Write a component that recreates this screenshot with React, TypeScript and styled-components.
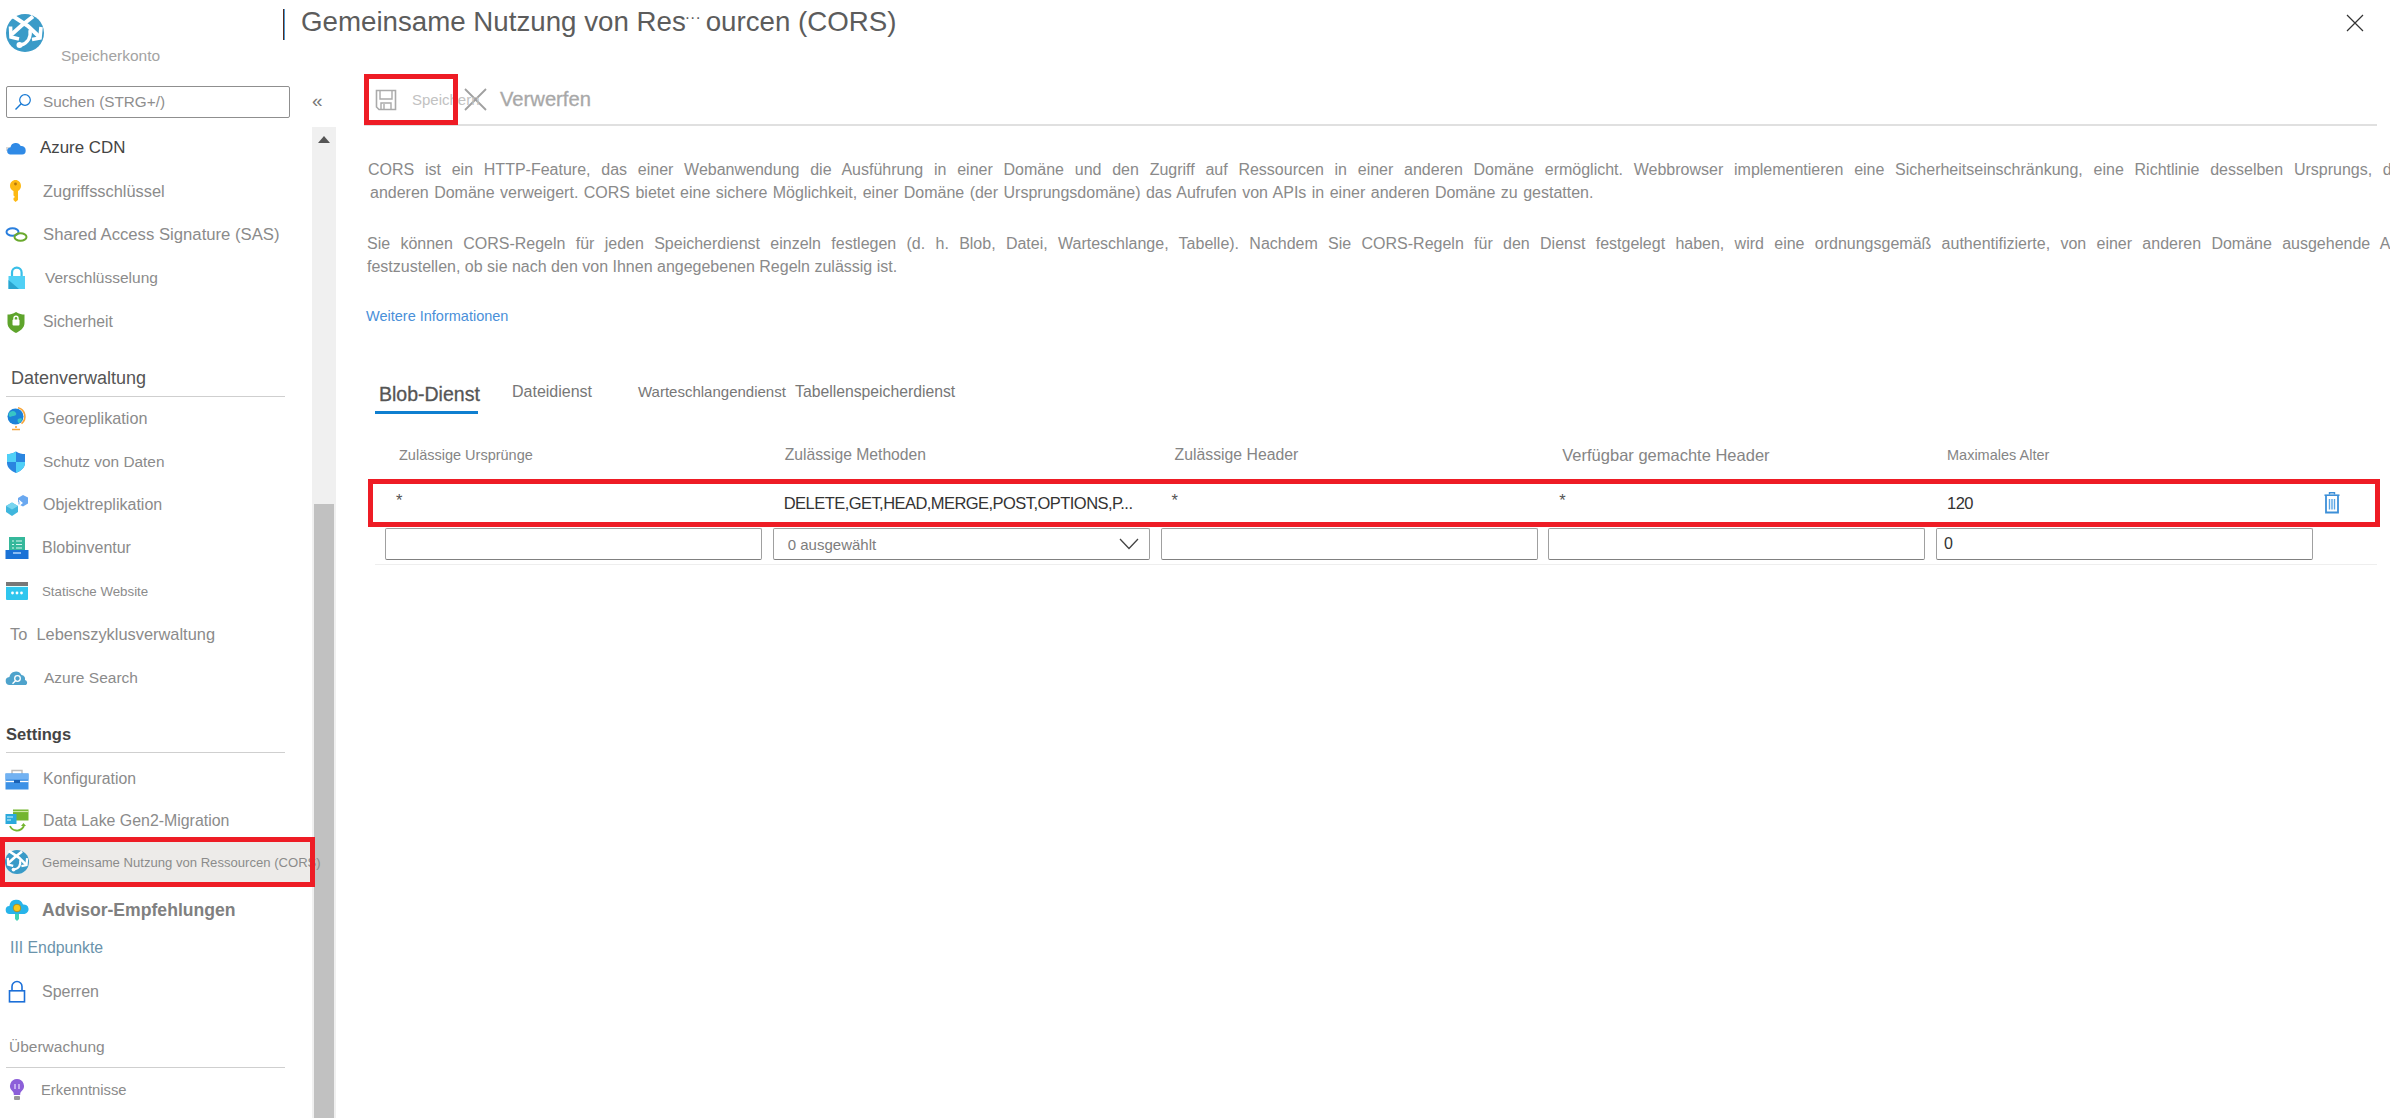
import React from "react";
import styled, { createGlobalStyle } from "styled-components";

const Global = createGlobalStyle`
  html, body { margin: 0; padding: 0; background: #fff; overflow: hidden; }
  body { font-family: "Liberation Sans", Arial, sans-serif; }
  * { box-sizing: border-box; }
`;

const Page = styled.div`
  width: 2390px;
  height: 1118px;
  overflow: hidden;
  display: flex;
  flex-direction: column;
`;
const Header = styled.header`
  height: 72px;
  flex-shrink: 0;
  display: flex;
  align-items: flex-start;
`;
const Brand = styled.div`
  width: 283px;
  height: 72px;
  padding: 14px 0 0 6px;
  flex-shrink: 0;
  display: flex;
`;
const BrandName = styled.span`
  font-size: 15.5px;
  color: #a3a3a3;
  margin: 34px 0 0 17px;
  line-height: 16px;
`;
const TitleBar = styled.div`
  width: 2px;
  height: 31px;
  margin-top: 9px;
  background: linear-gradient(90deg, #5a2a1c 50%, #4a9ad6 50%);
  flex-shrink: 0;
`;
const Title = styled.h1`
  margin: 2px 0 0 16px;
  font-size: 27.7px;
  line-height: 40px;
  font-weight: 400;
  color: #5c5c5c;
  white-space: nowrap;
`;
const TitleDots = styled.span`
  font-size: 16px;
  position: relative;
  top: -8px;
  margin: 0 5px 0 -1px;
`;
const Close = styled.button`
  margin: 13px 25px 0 auto;
  padding: 0;
  width: 20px;
  height: 20px;
  border: 0;
  background: none;
  display: block;
`;
const Body = styled.div`
  flex: 1;
  display: flex;
  min-height: 0;
`;
const Sidebar = styled.aside`
  width: 336px;
  flex-shrink: 0;
  display: flex;
  flex-direction: column;
`;
const SearchRow = styled.div`
  height: 54px;
  padding: 14px 0 0 6px;
  display: flex;
  flex-shrink: 0;
`;
const SearchBox = styled.div`
  width: 284px;
  height: 32px;
  border: 1px solid #8f8f8f;
  border-radius: 2px;
  display: flex;
  align-items: center;
  padding-left: 7px;
  gap: 11px;
`;
const SearchText = styled.span`
  font-size: 15.3px;
  color: #8e8e8e;
`;
const Collapse = styled.span`
  margin: 1px 0 0 22px;
  font-size: 19px;
  line-height: 28px;
  color: #777;
`;
const SideBody = styled.div`
  flex: 1;
  display: flex;
  min-height: 0;
`;
const NavList = styled.nav`
  width: 312px;
  flex-shrink: 0;
  position: relative;
  z-index: 1;
`;
const NavRow = styled.div<{ $h: number; $active?: boolean }>`
  height: ${(p) => p.$h}px;
  width: ${(p) => (p.$active ? 315 : 312)}px;
  display: flex;
  align-items: center;
  padding-left: 5px;
  white-space: nowrap;
  ${(p) => p.$active && "background:#edebe9; outline:5px solid #ee1c25; outline-offset:-5px;"}
`;
const IconSlot = styled.span`
  width: 24px;
  height: 24px;
  flex-shrink: 0;
  display: block;
`;
const NavLabel = styled.span<{ $gap: number; $size: number; $color: string; $bold?: boolean }>`
  margin-left: ${(p) => p.$gap}px;
  font-size: ${(p) => p.$size}px;
  color: ${(p) => p.$color};
  font-weight: ${(p) => (p.$bold ? 700 : 400)};
`;
const SectionHead = styled.div<{ $h: number; $x: number; $color: string; $size: number; $bold?: boolean; $pb?: number }>`
  height: ${(p) => p.$h}px;
  margin-right: 27px;
  margin-left: 6px;
  padding-left: ${(p) => p.$x - 6}px;
  padding-bottom: ${(p) => p.$pb ?? 8}px;
  display: flex;
  align-items: flex-end;
  border-bottom: 1.5px solid #cfcfcf;
  font-size: ${(p) => p.$size}px;
  font-weight: ${(p) => (p.$bold ? 600 : 400)};
  color: ${(p) => p.$color};
  line-height: 20px;
`;
const Scrollbar = styled.div`
  width: 24px;
  margin-top: 1px;
  background: #f0f0f0;
  padding: 9px 2px 0;
  display: flex;
  flex-direction: column;
`;
const ScrollUp = styled.span`
  width: 0;
  height: 0;
  margin: 0 auto;
  border-left: 6px solid transparent;
  border-right: 6px solid transparent;
  border-bottom: 7px solid #555;
`;
const ScrollThumb = styled.div`
  flex: 1;
  margin-top: 361px;
  background: #c1c1c1;
`;
const Main = styled.main`
  flex: 1;
  min-width: 0;
  overflow: hidden;
`;
const Toolbar = styled.div`
  margin: 3px 13px 0 28px;
  height: 51px;
  display: flex;
  align-items: center;
  border-bottom: 2px solid #e0e0e0;
`;
const SaveButton = styled.div`
  width: 94px;
  height: 51px;
  flex-shrink: 0;
  outline: 5px solid #ee1c25;
  outline-offset: -5px;
  display: flex;
  align-items: center;
  padding-left: 11px;
  white-space: nowrap;
  position: relative;
`;
const SaveLabel = styled.span`
  margin-left: 15px;
  font-size: 15px;
  color: #c2c2c2;
`;
const Discard = styled.div`
  margin-left: 6px;
  display: flex;
  align-items: center;
  gap: 13px;
  font-size: 20.2px;
  font-weight: 400;
  color: #a8a8a8;
  -webkit-text-stroke: 0.3px #a8a8a8;
`;
const Description = styled.div`
  margin: 32px 0 0 32px;
  font-size: 16px;
  line-height: 23px;
  color: #8a8a8a;
`;
const Paragraph = styled.p`
  margin: 0 0 28px;
`;
const Line = styled.span<{ $spacing?: number; $indent?: number }>`
  display: block;
  white-space: nowrap;
  word-spacing: ${(p) => p.$spacing ?? 0}px;
  margin-left: ${(p) => p.$indent ?? 0}px;
`;
const MoreLink = styled.a`
  display: block;
  margin: 12px 0 0 30px;
  font-size: 14.5px;
  line-height: 20px;
  color: #4a90d9;
`;
const Tabs = styled.div`
  margin: 48px 0 0 39px;
  display: flex;
  align-items: flex-start;
  height: 47px;
`;
const Tab = styled.div<{ $active?: boolean; $w: number; $size: number; $after?: number }>`
  width: ${(p) => p.$w}px;
  margin-right: ${(p) => p.$after ?? 0}px;
  height: ${(p) => (p.$active ? 40 : 36)}px;
  padding: ${(p) => (p.$active ? "0 0 0 4px" : "0")};
  font-size: ${(p) => p.$size}px;
  line-height: ${(p) => (p.$active ? 40 : 36)}px;
  color: ${(p) => (p.$active ? "#555" : "#777")};
  white-space: nowrap;
  ${(p) => p.$active && "border-bottom: 3px solid #0f7fd0; -webkit-text-stroke: 0.3px #555;"}
`;
const Table = styled.div`
  margin: 0 10px 0 32px;
`;
const gridCols = "repeat(5, 377px) 1fr";
const HeaderGrid = styled.div`
  display: grid;
  grid-template-columns: ${gridCols};
  column-gap: 10.75px;
  padding: 0 0 0 17px;
  height: 58px;
  align-items: start;
`;
const HeaderCell = styled.div<{ $size: number; $x: number }>`
  padding: 24px 0 0 ${(p) => p.$x}px;
  font-size: ${(p) => p.$size}px;
  line-height: 20px;
  color: #858585;
  white-space: nowrap;
`;
const DataGrid = styled.div`
  display: grid;
  grid-template-columns: ${gridCols};
  column-gap: 10.75px;
  padding: 0 0 0 17px;
  height: 48px;
  align-items: center;
  outline: 5px solid #ee1c25;
  outline-offset: -5px;
`;
const DataCell = styled.div<{ $raise?: boolean }>`
  padding-left: 11px;
  font-size: 16.5px;
  letter-spacing: -0.55px;
  color: #333;
  white-space: nowrap;
  ${(p) => p.$raise && "position: relative; top: -3px; color:#555;"}
`;
const TrashCell = styled.div`
  display: flex;
  justify-content: flex-start;
`;
const InputGrid = styled.div`
  display: grid;
  grid-template-columns: ${gridCols};
  column-gap: 10.75px;
  padding: 1px 0 5px 10px;
  height: 38px;
  border-bottom: 1px solid #eeeeee;
  margin: 0 3px 0 7px;
`;
const Field = styled.input`
  width: 100%;
  height: 32px;
  border: 1px solid #a0a0a0;
  border-bottom-color: #808080;
  border-radius: 2px;
  padding: 0 0 0 7px;
  font: 16px "Liberation Sans", Arial, sans-serif;
  color: #333;
  background: #fff;
`;
const SelectBox = styled.div`
  height: 32px;
  border: 1px solid #a0a0a0;
  border-bottom-color: #808080;
  border-radius: 2px;
  padding: 0 10px 0 14px;
  display: flex;
  align-items: center;
  justify-content: space-between;
  font-size: 15px;
  color: #7d7d7d;
`;

const Img = styled.svg`
  display: block;
  flex-shrink: 0;
`;

const CorsLogo = ({ size }: { size: number }) => (
  <Img width={size} height={size} viewBox="0 0 38 38">
    <circle cx="19" cy="19" r="19" fill="#3a9bc8" />
    <g fill="none" stroke="#fff" strokeWidth="4" strokeLinejoin="miter">
      <path d="M6 1.5 L22 12 L34 23.5" />
      <path d="M35 13 L34 24 L26 25.5" strokeWidth="3.6" />
      <path d="M27 2.5 L15 12 L5.5 20.5" />
      <path d="M4.5 12.5 L5 23 L13 25" strokeWidth="3.6" />
      <path d="M24 16 C25 23 22 29 15 31" strokeWidth="3.4" />
    </g>
    <circle cx="13.5" cy="31" r="3" fill="#fff" />
  </Img>
);

const icons: Record<string, React.ReactNode> = {
  cdn: (
    <Img width="24" height="24" viewBox="0 0 24 24">
      <path d="M1 12h6M1 14h6" stroke="#b5b5b5" strokeWidth="1" />
      <path d="M5 18.5a3.6 3.6 0 0 1 .4-7.1A5.5 5.5 0 0 1 15.7 10a4.3 4.3 0 0 1 5 4.4 4 4 0 0 1-3.6 4.1z" fill="#2f8ae6" />
    </Img>
  ),
  key: (
    <Img width="24" height="24" viewBox="0 0 24 24">
      <path d="M10.5 1 C13.5 1 16 3.5 16 7 C16 9.5 14.5 11 13 12 L13 21 L10.5 23 L8.5 21 L8.5 19 L10 18 L8.5 16.5 L8.5 12 C6.5 11 5 9.5 5 7 C5 3.5 7.5 1 10.5 1z" fill="#fdb913" />
      <circle cx="10.5" cy="5" r="1.4" fill="#b5760a" />
    </Img>
  ),
  link: (
    <Img width="24" height="24" viewBox="0 0 24 24">
      <ellipse cx="7.5" cy="9" rx="6" ry="3.8" fill="none" stroke="#2a7fde" strokeWidth="2" />
      <ellipse cx="15.5" cy="14" rx="6" ry="3.8" fill="none" stroke="#6aa92d" strokeWidth="2" />
    </Img>
  ),
  lock: (
    <Img width="24" height="24" viewBox="0 0 24 24">
      <path d="M7 11V6.5a4.8 4.8 0 0 1 9.6 0V11" fill="none" stroke="#39bfe8" strokeWidth="2.2" />
      <rect x="3.5" y="10" width="16.5" height="13" fill="#50d0f5" />
      <path d="M3.5 23 L3.5 14 L14 23z" fill="#2aa4cf" />
    </Img>
  ),
  shield: (
    <Img width="24" height="24" viewBox="0 0 24 24">
      <path d="M11 2 C14 4 17 4.5 19.5 4.5 V13 C19.5 18 15 21 11 23 C7 21 2.5 18 2.5 13 V4.5 C5 4.5 8 4 11 2z" fill="#5ea42c" />
      <rect x="7.5" y="9.5" width="7" height="6" rx="1" fill="#fff" />
      <path d="M9 10V8.3a2 2 0 0 1 4 0V10" fill="none" stroke="#fff" strokeWidth="1.4" />
    </Img>
  ),
  globe: (
    <Img width="24" height="24" viewBox="0 0 24 24">
      <circle cx="10.5" cy="9.5" r="8" fill="#1c82d8" />
      <path d="M5 5c3-2 5-1 6 1s-1 3-3 3-3 2-4 0 0-3 1-4zM13 12c2-1 4-1 4 0s-2 4-3 4-2-3-1-4z" fill="#38c5c5" />
      <path d="M13 0.8a9 9 0 0 1 3.5 15.8" fill="none" stroke="#f6a53a" strokeWidth="1.6" />
      <path d="M11 19v2M7 22.5h8" stroke="#f6a53a" strokeWidth="1.6" />
    </Img>
  ),
  shieldBlue: (
    <Img width="24" height="24" viewBox="0 0 24 24">
      <path d="M11 1.5 C14 3.5 17 4 20 4 V13 C20 18 15 21.5 11 23 C7 21.5 2 18 2 13 V4 C5 4 8 3.5 11 1.5z" fill="#2a85e0" />
      <path d="M11 1.5 C8 3.5 5 4 2 4 V12 H11z M11 12 H20 V13 C20 18 15 21.5 11 23z" fill="#4fd0f7" />
    </Img>
  ),
  cubes: (
    <Img width="24" height="24" viewBox="0 0 24 24">
      <path d="M13 5 L18 2 L23 4.5 L23 10.5 L18 13.5 L13 11z" fill="#6aa8f0" />
      <path d="M1 13 L7 9.5 L13 13 L13 19 L7 23 L1 19z" fill="#3fb6dd" />
      <path d="M1 13 L7 16.5 L13 13 L7 9.5z" fill="#78d5ef" />
      <path d="M10 10h7M14 7.5l3 2.5-3 2.5" fill="none" stroke="#fff" strokeWidth="1.2" />
    </Img>
  ),
  blob: (
    <Img width="24" height="24" viewBox="0 0 24 24">
      <path d="M4 1h16v14H4z" fill="#35b89b" />
      <path d="M7 5h2M11 5h6M7 8.5h2M11 8.5h6M7 12h2M11 12h6" stroke="#d7f5ee" strokeWidth="1.2" />
      <rect x="0.5" y="14" width="23" height="9" fill="#1a72d6" />
      <path d="M8 17h8" stroke="#bcdcff" strokeWidth="1.4" />
    </Img>
  ),
  web: (
    <Img width="24" height="24" viewBox="0 0 24 24">
      <rect x="1" y="3" width="22" height="18" rx="1" fill="#2fc6ee" />
      <rect x="1" y="3" width="22" height="4" fill="#777" />
      <path d="M1 7.5h22" stroke="#dff" strokeWidth="1" />
      <circle cx="7.5" cy="14" r="1.4" fill="#fff" />
      <circle cx="12" cy="14" r="1.4" fill="#fff" />
      <circle cx="16.5" cy="14" r="1.4" fill="#fff" />
    </Img>
  ),
  search: (
    <Img width="24" height="24" viewBox="0 0 24 24">
      <path d="M5 19a4 4 0 0 1-.6-8A6.5 6.5 0 0 1 16.5 9a4.4 4.4 0 0 1 3.5 5 2.8 2.8 0 0 1 1 5z" fill="#4ea3cc" />
      <circle cx="12.5" cy="12.5" r="2.8" fill="none" stroke="#fff" strokeWidth="1.3" />
      <path d="M10.5 14.7l-3 3" stroke="#fff" strokeWidth="1.4" />
    </Img>
  ),
  toolbox: (
    <Img width="24" height="24" viewBox="0 0 24 24">
      <path d="M7 7V3.5h10V7" fill="none" stroke="#bbb" strokeWidth="1.4" />
      <rect x="0.5" y="6.5" width="23" height="16" fill="#3c91e6" />
      <rect x="0.5" y="6.5" width="23" height="6" fill="#72b2f2" />
      <path d="M0.5 14.5h23" stroke="#fff" strokeWidth="1.3" />
      <rect x="9" y="13" width="6" height="3" fill="#1a62b5" />
    </Img>
  ),
  lake: (
    <Img width="24" height="24" viewBox="0 0 24 24">
      <rect x="8" y="0.5" width="15.5" height="11" fill="#74b52f" />
      <path d="M8 2.5h15.5" stroke="#cfe9a6" strokeWidth="1.2" />
      <rect x="0.5" y="5" width="11" height="10" fill="#2aa9dc" />
      <path d="M2 8h6M2 11h4" stroke="#d6f3ff" strokeWidth="1" />
      <path d="M5 17c2 5 10 7 14 0" fill="none" stroke="#74b52f" strokeWidth="1.8" />
      <path d="M16 17h5l-2.5-3z" fill="#74b52f" />
    </Img>
  ),
  cors: <CorsLogo size={24} />,
  advisor: (
    <Img width="24" height="24" viewBox="0 0 24 24">
      <path d="M5 16a4 4 0 0 1-.6-8A7 7 0 0 1 18 6.5a4.7 4.7 0 0 1 1.5 9.5z" fill="#27b4ea" />
      <circle cx="12" cy="10" r="3.8" fill="#f8c81c" stroke="#a57f10" strokeWidth=".7" />
      <path d="M10 16h4v5l-2 2-2-2z" fill="#3fd3b5" />
    </Img>
  ),
  padlock: (
    <Img width="24" height="24" viewBox="0 0 24 24">
      <path d="M7 11V6.5a5 5 0 0 1 10 0V11" fill="none" stroke="#1b6fd8" strokeWidth="1.6" />
      <rect x="4.5" y="10.8" width="15" height="11" fill="#fff" stroke="#1b6fd8" strokeWidth="1.6" />
    </Img>
  ),
  bulb: (
    <Img width="24" height="24" viewBox="0 0 24 24">
      <path d="M12 1a7 7 0 0 0-4.5 12.3c1 1 1.3 2 1.3 3.7h6.4c0-1.7.3-2.7 1.3-3.7A7 7 0 0 0 12 1z" fill="#8c5fd9" />
      <path d="M10 6v5M14 6v5" stroke="#e2d4fa" strokeWidth="1.3" />
      <rect x="9" y="18" width="6" height="4" rx="1" fill="#999" />
    </Img>
  ),
};

type Item =
  | { kind: "row"; h: number; icon?: string; label: string; gap: number; size?: number; color?: string; bold?: boolean; active?: boolean }
  | { kind: "head"; h: number; label: string; x: number; color: string; size: number; bold?: boolean; pb?: number };

const GREY = "#8b8b8b";
const nav: Item[] = [
  { kind: "row", h: 43.5, icon: "cdn", label: "Azure CDN", gap: 11, size: 16.9, color: "#444" },
  { kind: "row", h: 43.5, icon: "key", label: "Zugriffsschlüssel", gap: 14, size: 16.4 },
  { kind: "row", h: 43.5, icon: "link", label: "Shared Access Signature (SAS)", gap: 14, size: 16.7 },
  { kind: "row", h: 43.5, icon: "lock", label: "Verschlüsselung", gap: 16, size: 15.5 },
  { kind: "row", h: 43.5, icon: "shield", label: "Sicherheit", gap: 14, size: 15.7 },
  { kind: "head", h: 53.5, label: "Datenverwaltung", x: 11, color: "#555", size: 18 },
  { kind: "row", h: 43.2, icon: "globe", label: "Georeplikation", gap: 14, size: 16.2 },
  { kind: "row", h: 43.2, icon: "shieldBlue", label: "Schutz von Daten", gap: 14, size: 15.4 },
  { kind: "row", h: 43.2, icon: "cubes", label: "Objektreplikation", gap: 14, size: 16 },
  { kind: "row", h: 43.2, icon: "blob", label: "Blobinventur", gap: 13, size: 16 },
  { kind: "row", h: 43.2, icon: "web", label: "Statische Website", gap: 13, size: 13.3 },
  { kind: "row", h: 43.2, label: "To\u00a0\u00a0Lebenszyklusverwaltung", gap: 5, size: 16.4 },
  { kind: "row", h: 43.2, icon: "search", label: "Azure Search", gap: 15, size: 15.5 },
  { kind: "head", h: 54, label: "Settings", x: 6, color: "#444", size: 16.5, bold: true },
  { kind: "row", h: 51, icon: "toolbox", label: "Konfiguration", gap: 14, size: 15.8 },
  { kind: "row", h: 33, icon: "lake", label: "Data Lake Gen2-Migration", gap: 14, size: 15.9 },
  { kind: "row", h: 50, icon: "cors", label: "Gemeinsame Nutzung von Ressourcen (CORS)", gap: 13, size: 13.1, active: true },
  { kind: "row", h: 46, icon: "advisor", label: "Advisor-Empfehlungen", gap: 13, size: 17.6, color: "#808080", bold: true },
  { kind: "row", h: 30, label: "III Endpunkte", gap: 5, size: 15.8, color: "#6a93ab" },
  { kind: "row", h: 58, icon: "padlock", label: "Sperren", gap: 13, size: 16 },
  { kind: "head", h: 47, label: "Überwachung", x: 9, color: "#8b8b8b", size: 15.5, pb: 10 },
  { kind: "row", h: 44, icon: "bulb", label: "Erkenntnisse", gap: 12, size: 14.8 },
];

const columns = [
  { label: "Zulässige Ursprünge", size: 14.5, x: 14, value: "*", raise: true },
  { label: "Zulässige Methoden", size: 15.7, x: 12, value: "DELETE,GET,HEAD,MERGE,POST,OPTIONS,P..." },
  { label: "Zulässige Header", size: 15.8, x: 14, value: "*", raise: true },
  { label: "Verfügbar gemachte Header", size: 16.5, x: 14, value: "*", raise: true },
  { label: "Maximales Alter", size: 14.5, x: 11, value: "120" },
];

export default function App() {
  return (
    <Page>
      <Global />
      <Header>
        <Brand>
          <CorsLogo size={38} />
          <BrandName>Speicherkonto</BrandName>
        </Brand>
        <TitleBar />
        <Title>
          Gemeinsame Nutzung von Res<TitleDots>···</TitleDots>ourcen (CORS)
        </Title>
        <Close aria-label="Schließen">
          <Img width="20" height="20" viewBox="0 0 20 20">
            <path d="M2 2 L18 18 M18 2 L2 18" stroke="#333" strokeWidth="1.2" />
          </Img>
        </Close>
      </Header>
      <Body>
        <Sidebar>
          <SearchRow>
            <SearchBox>
              <Img width="18" height="18" viewBox="0 0 18 18">
                <circle cx="11" cy="7" r="5.3" fill="none" stroke="#1578d4" strokeWidth="1.2" />
                <path d="M7.2 10.8 L1.5 16.5" stroke="#1578d4" strokeWidth="1.4" />
              </Img>
              <SearchText>Suchen (STRG+/)</SearchText>
            </SearchBox>
            <Collapse>«</Collapse>
          </SearchRow>
          <SideBody>
            <NavList>
              {nav.map((it) =>
                it.kind === "head" ? (
                  <SectionHead key={it.label} $h={it.h} $x={it.x} $color={it.color} $size={it.size} $bold={it.bold} $pb={it.pb}>
                    {it.label}
                  </SectionHead>
                ) : (
                  <NavRow key={it.label} $h={it.h} $active={it.active}>
                    {it.icon && <IconSlot>{icons[it.icon]}</IconSlot>}
                    <NavLabel $gap={it.gap} $size={it.size ?? 15} $color={it.color ?? GREY} $bold={it.bold}>
                      {it.label}
                    </NavLabel>
                  </NavRow>
                )
              )}
            </NavList>
            <Scrollbar>
              <ScrollUp />
              <ScrollThumb />
            </Scrollbar>
          </SideBody>
        </Sidebar>
        <Main>
          <Toolbar>
            <SaveButton>
              <Img width="22" height="22" viewBox="0 0 22 22">
                <path d="M1.5 1.5H20.5V20.5H4L1.5 18z" fill="none" stroke="#aaa" strokeWidth="1.6" />
                <path d="M5 1.5V10H17V1.5" fill="none" stroke="#aaa" strokeWidth="1.4" />
                <path d="M6 20.5V14H16V20.5M9 15V20" fill="none" stroke="#aaa" strokeWidth="1.4" />
              </Img>
              <SaveLabel>Speichern</SaveLabel>
            </SaveButton>
            <Discard>
              <Img width="23" height="23" viewBox="0 0 23 23">
                <path d="M1 1 L22 22 M22 1 L1 22" stroke="#a0a0a0" strokeWidth="1.8" />
              </Img>
              Verwerfen
            </Discard>
          </Toolbar>
          <Description>
            <Paragraph>
              <Line $spacing={6.3}>
                CORS ist ein HTTP-Feature, das einer Webanwendung die Ausführung in einer Domäne und den Zugriff auf Ressourcen in einer anderen Domäne ermöglicht. Webbrowser implementieren eine Sicherheitseinschränkung, eine Richtlinie desselben Ursprungs, die
              </Line>
              <Line $indent={2} $spacing={1}>
                anderen Domäne verweigert. CORS bietet eine sichere Möglichkeit, einer Domäne (der Ursprungsdomäne) das Aufrufen von APIs in einer anderen Domäne zu gestatten.
              </Line>
            </Paragraph>
            <Paragraph>
              <Line $spacing={5.85} $indent={-1}>
                Sie können CORS-Regeln für jeden Speicherdienst einzeln festlegen (d. h. Blob, Datei, Warteschlange, Tabelle). Nachdem Sie CORS-Regeln für den Dienst festgelegt haben, wird eine ordnungsgemäß authentifizierte, von einer anderen Domäne ausgehende Anfrage
              </Line>
              <Line $indent={-1}>festzustellen, ob sie nach den von Ihnen angegebenen Regeln zulässig ist.</Line>
            </Paragraph>
          </Description>
          <MoreLink>Weitere Informationen</MoreLink>
          <Tabs>
            <Tab $active $w={103} $after={34} $size={19.5}>Blob-Dienst</Tab>
            <Tab $w={126} $size={16}>Dateidienst</Tab>
            <Tab $w={157} $size={15}>Warteschlangendienst</Tab>
            <Tab $w={170} $size={15.75}>Tabellenspeicherdienst</Tab>
          </Tabs>
          <Table>
            <HeaderGrid>
              {columns.map((c) => (
                <HeaderCell key={c.label} $size={c.size} $x={c.x}>{c.label}</HeaderCell>
              ))}
            </HeaderGrid>
            <DataGrid>
              {columns.map((c) => (
                <DataCell key={c.label} $raise={c.raise}>{c.value}</DataCell>
              ))}
              <TrashCell>
                <Img width="16" height="22" viewBox="0 0 16 22">
                  <path d="M5.5 2.5V0.8H10.5V2.5" fill="none" stroke="#3d8fd8" strokeWidth="1.4" />
                  <path d="M0.5 3.2H15.5" stroke="#3d8fd8" strokeWidth="1.6" />
                  <path d="M2 3.5V20.5H14V3.5" fill="none" stroke="#3d8fd8" strokeWidth="1.8" />
                  <path d="M5.5 7V17.5M8 7V17.5M10.5 7V17.5" stroke="#5aa5e5" strokeWidth="1.4" />
                </Img>
              </TrashCell>
            </DataGrid>
            <InputGrid>
              <Field readOnly value="" />
              <SelectBox>
                0 ausgewählt
                <Img width="20" height="12" viewBox="0 0 20 12">
                  <path d="M1 1 L10 10.5 L19 1" fill="none" stroke="#444" strokeWidth="1.3" />
                </Img>
              </SelectBox>
              <Field readOnly value="" />
              <Field readOnly value="" />
              <Field readOnly value="0" />
            </InputGrid>
          </Table>
        </Main>
      </Body>
    </Page>
  );
}
